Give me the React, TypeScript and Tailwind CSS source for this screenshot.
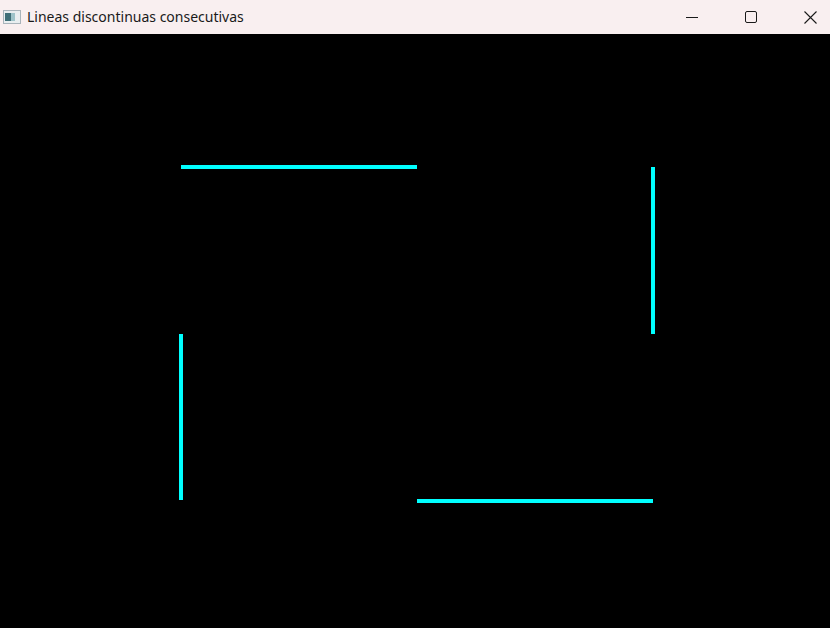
export default function App() {
  return (
    <div className="flex h-[628px] w-[830px] flex-col overflow-hidden bg-black">
      <header className="flex h-[34px] shrink-0 items-center bg-[#f9eff0] font-['Noto_Sans',sans-serif] text-[14px] text-[#1a1a1a]">
        <svg className="ml-[3px]" width="18" height="16" viewBox="0 0 18 16">
          <rect x="0.5" y="1.5" width="17" height="13" fill="#e9eef0" stroke="#a9b4bb" />
          <rect x="2" y="4" width="6" height="8" fill="#3f6f78" />
          <rect x="8" y="4" width="4" height="8" fill="#9ec3c9" />
        </svg>
        <span className="ml-[6px] leading-none">Lineas discontinuas consecutivas</span>
        <div className="mr-[13px] ml-auto flex h-full items-center gap-[47px]">
          <svg width="12" height="12" viewBox="0 0 12 12">
            <path d="M0 6.5h12" stroke="#1a1a1a" strokeWidth="1" />
          </svg>
          <svg width="12" height="12" viewBox="0 0 12 12">
            <rect x="0.5" y="0.5" width="11" height="11" rx="1.5" fill="none" stroke="#1a1a1a" strokeWidth="1" />
          </svg>
          <svg width="13" height="13" viewBox="0 0 13 13">
            <path d="M0.5 0.5l12 12M12.5 0.5l-12 12" stroke="#1a1a1a" strokeWidth="1.1" />
          </svg>
        </div>
      </header>
      <main className="flex-1">
        <svg width="830" height="594" viewBox="0 0 830 594" shapeRendering="crispEdges">
          <g fill="#00ffff">
            <rect x="181" y="131" width="236" height="4" />
            <rect x="651" y="133" width="4" height="167" />
            <rect x="179" y="300" width="4" height="166" />
            <rect x="417" y="465" width="236" height="4" />
          </g>
        </svg>
      </main>
    </div>
  )
}
